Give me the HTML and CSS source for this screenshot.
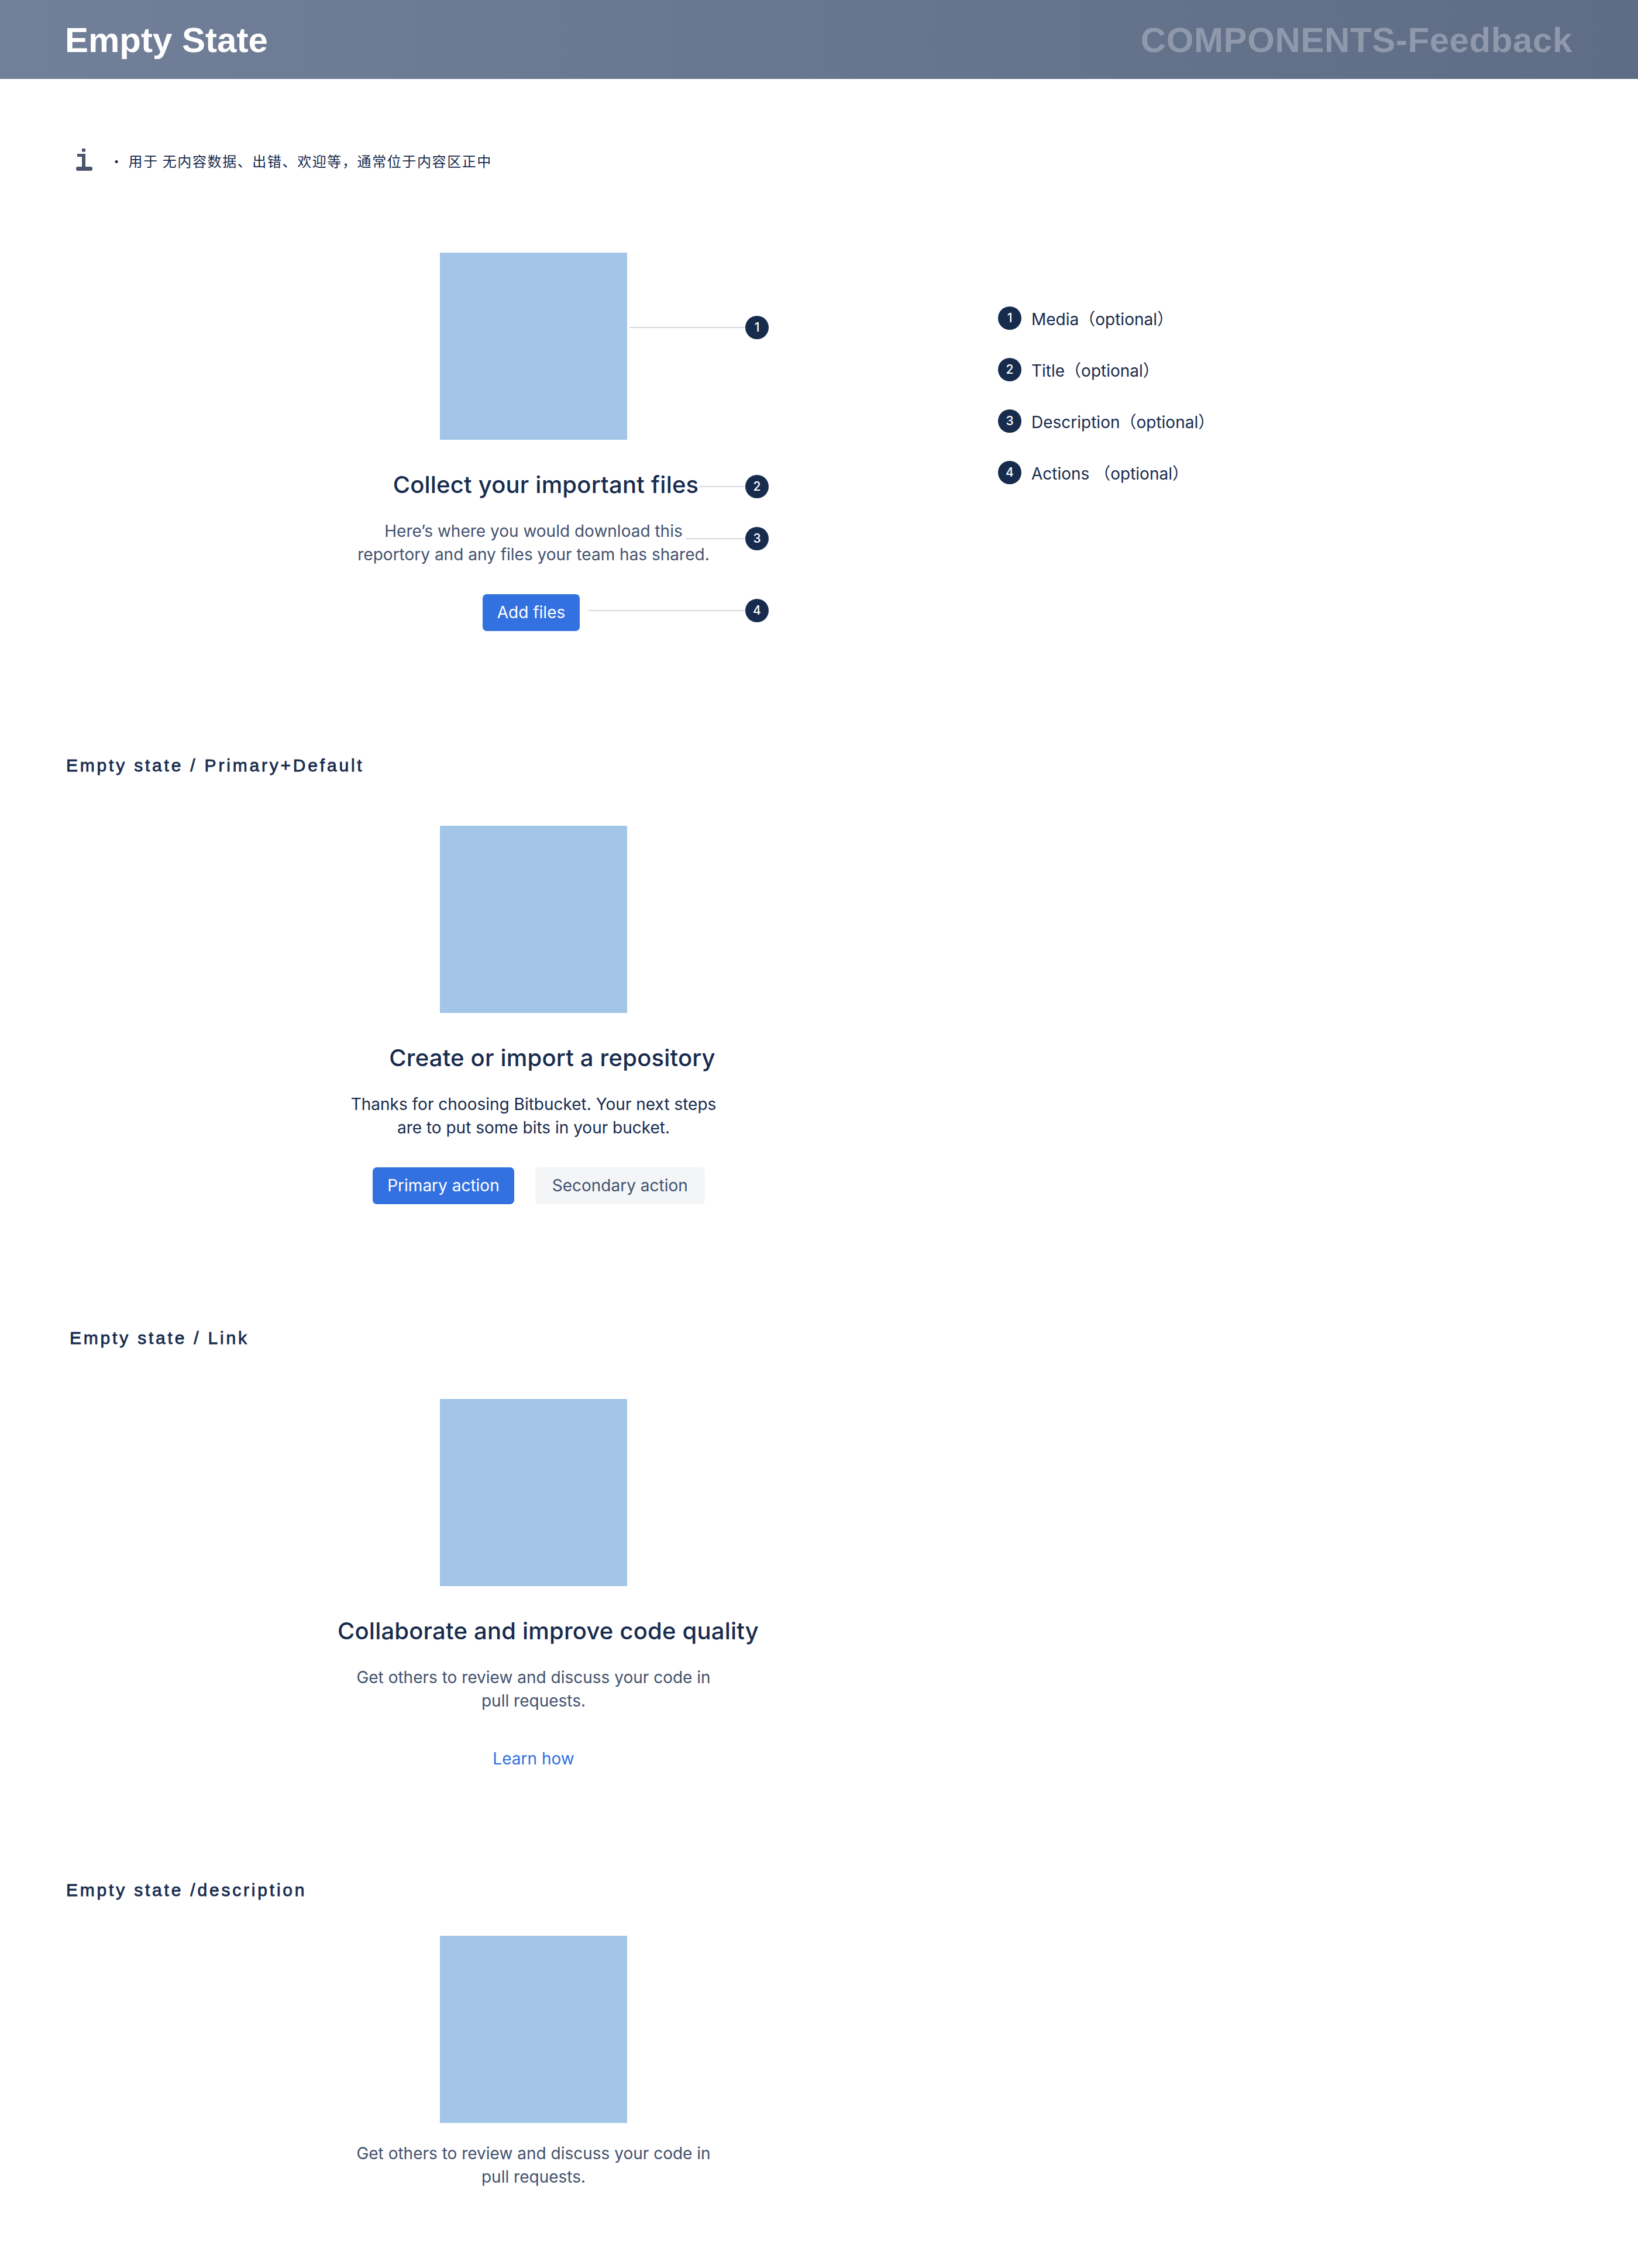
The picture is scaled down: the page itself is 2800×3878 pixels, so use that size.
FILE: index.html
```html
<!DOCTYPE html>
<html lang="zh-CN">
<head>
<meta charset="utf-8">
<title>Empty State</title>
<link rel="stylesheet" href="styles.css">
</head>
<body>
<header class="topbar">
  <h1 class="topbar-title">Empty State</h1>
  <div class="topbar-category">COMPONENTS-Feedback</div>
</header>
<main class="page">
  <div class="intro">
    <svg class="intro-icon" viewBox="0 0 28 38" width="28" height="38" aria-hidden="true">
      <rect x="10" y="0" width="6" height="5.5"/>
      <path d="M2 9h14v24h-6V14H2z"/>
      <rect x="0" y="31" width="28" height="7" rx="3"/>
    </svg>
    <p class="intro-text">· 用于 无内容数据、出错、欢迎等，通常位于内容区正中</p>
  </div>

  <section class="anatomy">
    <div class="stage">
      <div class="media"></div>
      <h2 class="es-title es-title-first">Collect your important files</h2>
      <p class="es-desc">Here’s where you would download this<br>reportory and any files your team has shared.</p>
      <div class="es-actions">
        <button class="btn btn-primary btn-add">Add files</button>
      </div>
      <span class="callout callout-1"><i class="callout-line"></i><b class="marker">1</b></span>
      <span class="callout callout-2"><i class="callout-line"></i><b class="marker">2</b></span>
      <span class="callout callout-3"><i class="callout-line"></i><b class="marker">3</b></span>
      <span class="callout callout-4"><i class="callout-line"></i><b class="marker">4</b></span>
    </div>
    <ol class="legend">
      <li class="legend-item"><b class="marker">1</b><span>Media（optional）</span></li>
      <li class="legend-item"><b class="marker">2</b><span>Title（optional）</span></li>
      <li class="legend-item"><b class="marker">3</b><span>Description（optional）</span></li>
      <li class="legend-item"><b class="marker">4</b><span>Actions （optional）</span></li>
    </ol>
  </section>

  <section class="section section-primary">
    <h3 class="section-heading">Empty state / Primary+Default</h3>
    <div class="demo">
      <div class="media"></div>
      <h2 class="es-title es-title-shift">Create or import a repository</h2>
      <p class="es-desc es-desc-dark">Thanks for choosing Bitbucket. Your next steps<br>are to put some bits in your bucket.</p>
      <div class="es-actions es-actions-pair">
        <button class="btn btn-primary">Primary action</button>
        <button class="btn btn-secondary">Secondary action</button>
      </div>
    </div>
  </section>

  <section class="section section-link">
    <h3 class="section-heading section-heading-link">Empty state / Link</h3>
    <div class="demo">
      <div class="media"></div>
      <h2 class="es-title">Collaborate and improve code quality</h2>
      <p class="es-desc">Get others to review and discuss your code in<br>pull requests.</p>
      <div class="es-actions">
        <button class="btn btn-link">Learn how</button>
      </div>
    </div>
  </section>

  <section class="section section-desc">
    <h3 class="section-heading">Empty state /description</h3>
    <div class="demo demo-desc">
      <div class="media"></div>
      <p class="es-desc es-desc-only">Get others to review and discuss your code in<br>pull requests.</p>
    </div>
  </section>
</main>
</body>
</html>
```

FILE: styles.css
```css
* { box-sizing: border-box; }

body {
  margin: 0;
  background: #ffffff;
  font-family: Inter, "Noto Sans CJK SC", sans-serif;
  color: #172b4d;
}

/* ---------- header ---------- */
.topbar {
  height: 135px;
  display: flex;
  align-items: center;
  justify-content: space-between;
  padding: 3px 112px 0 111px;
  background: linear-gradient(90deg, #717f98 0%, #5f6c86 100%);
  font-family: "Liberation Sans", Arial, sans-serif;
  font-weight: 700;
  font-size: 60px;
}
.topbar-title {
  margin: 0;
  font-size: inherit;
  line-height: 1.117;
  color: #ffffff;
}
.topbar-category {
  line-height: 1.117;
  letter-spacing: 0.6px;
  color: #8f99ab;
}

/* ---------- intro ---------- */
.intro {
  display: flex;
  align-items: flex-end;
  height: 38px;
  margin-top: 119px;
  padding-left: 130px;
}
.intro-icon {
  display: block;
  flex: none;
  fill: #4a556e;
}
.intro-text {
  margin: 0 0 5px 29px;
  font-family: "Noto Sans CJK SC", sans-serif;
  font-size: 24px;
  line-height: 24px;
  letter-spacing: 1.6px;
  color: #172b4d;
}

/* ---------- empty state pieces ---------- */
.media {
  width: 320px;
  height: 320px;
  flex: none;
  background: #a3c5e7;
}
.es-title {
  margin: 53px 0 0;
  padding-left: 50px;
  font-size: 40px;
  line-height: 48px;
  font-weight: 500;
  letter-spacing: 0.2px;
  color: #172b4d;
  white-space: nowrap;
}
.es-title-first { padding-left: 42px; }
.es-title-shift { padding-left: 64px; }
.es-desc {
  margin: 35px 0 0;
  font-size: 28px;
  line-height: 40px;
  text-align: center;
  color: #42526e;
  white-space: nowrap;
}
.es-desc-dark { color: #172b4d; }
.es-desc-only { margin-top: 32px; }

.es-actions {
  display: flex;
  gap: 36px;
  margin-top: 48px;
}
.es-actions-pair { padding-left: 18px; }
.btn {
  height: 63px;
  padding: 0 25px;
  border: 0;
  border-radius: 7px;
  font-family: Inter, sans-serif;
  font-size: 28px;
  font-weight: 400;
  line-height: 63px;
  cursor: pointer;
}
.btn-add { margin-right: 8px; }
.btn-primary {
  background: #3370e0;
  color: #ffffff;
}
.btn-secondary {
  padding: 0 29px;
  background: #f4f5f7;
  color: #42526e;
}
.btn-link {
  background: transparent;
  color: #2f6fe0;
}

/* ---------- anatomy ---------- */
.anatomy {
  display: flex;
  align-items: flex-start;
  margin-top: 140px;
}
.stage {
  position: relative;
  flex: none;
  width: 800px;
  margin-left: 512px;
  display: flex;
  flex-direction: column;
  align-items: center;
}
.callout {
  position: absolute;
  display: flex;
  align-items: center;
  height: 40px;
}
.callout-line {
  flex: 1;
  height: 2px;
  background: #d6dae1;
}
.callout-1 { left: 564px; top: 108px; width: 238px; }
.callout-2 { left: 683px; top: 380px; width: 119px; }
.callout-3 { left: 660px; top: 469px; width: 142px; }
.callout-4 { left: 494px; top: 592px; width: 308px; }

.marker {
  flex: none;
  width: 40px;
  height: 40px;
  border-radius: 50%;
  background: #172b4d;
  color: #ffffff;
  font-family: Inter, sans-serif;
  font-size: 21px;
  font-weight: 500;
  line-height: 40px;
  text-align: center;
}

.legend {
  list-style: none;
  margin: 92px 0 0 394px;
  padding: 0;
  display: flex;
  flex-direction: column;
  gap: 48px;
}
.legend-item {
  display: flex;
  align-items: center;
  gap: 17px;
  height: 40px;
  font-size: 28px;
  color: #172b4d;
  white-space: pre;
}

/* ---------- example sections ---------- */
.section { margin-top: 212px; }
.section-link { margin-top: 211px; }
.section-desc { margin-top: 175px; }

.section-heading {
  margin: 0;
  padding-left: 113px;
  font-family: "Liberation Sans", Arial, sans-serif;
  font-size: 30px;
  line-height: 36px;
  font-weight: 400;
  letter-spacing: 3.8px;
  -webkit-text-stroke: 0.8px #172b4d;
  color: #172b4d;
}
.section-heading-link { padding-left: 119px; }

.demo {
  width: 800px;
  margin: 85px 0 0 512px;
  display: flex;
  flex-direction: column;
  align-items: center;
}
.section-link .demo { margin-top: 86px; }
.demo-desc { margin-top: 60px; }
```
